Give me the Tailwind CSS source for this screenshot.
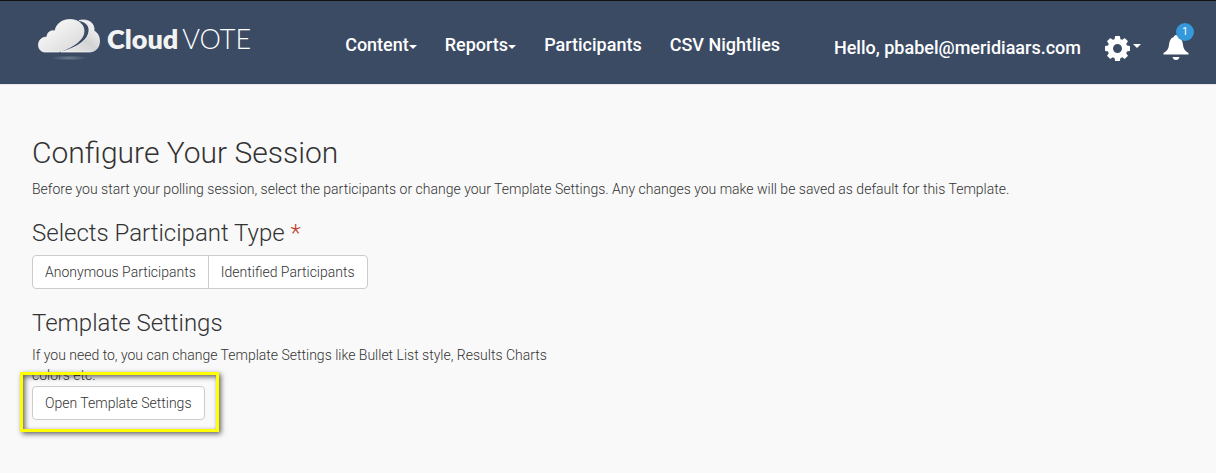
<!DOCTYPE html>
<html lang="en">
<head>
  <meta charset="UTF-8" />
  <meta name="viewport" content="width=device-width, initial-scale=1.0" />
  <title>CloudVOTE - Configure Your Session</title>
  <script src="https://cdn.jsdelivr.net/npm/@tailwindcss/browser@4"></script>
</head>

<body class="min-h-screen bg-[#f9f9f9] font-['Roboto',sans-serif] text-sm leading-5 font-light text-[#333]">

  <header class="flex min-h-[85px] items-start border-t border-b border-t-[#111] border-b-[#e7e7e7] bg-[#3b4b64] pl-[38px] pr-[27px] text-lg leading-6 font-medium text-white">
    <a href="#" class="flex items-start pt-4 font-['Lato',sans-serif] text-[27px] leading-11" aria-label="CloudVOTE home">
      <svg class="mr-[7px] h-[44px] w-[62px]" viewBox="0 0 62 44" aria-hidden="true">
        <defs>
          <linearGradient id="front" x1="0" y1="0" x2="1" y2="1">
            <stop offset="0" stop-color="#fff" />
            <stop offset="1" stop-color="#d6d6d6" />
          </linearGradient>
          <linearGradient id="back" x1="1" y1="0" x2="0" y2="1">
            <stop offset="0" stop-color="#fff" />
            <stop offset="0.5" stop-color="#d3d3d3" />
            <stop offset="1" stop-color="#eee" />
          </linearGradient>
          <radialGradient id="shade">
            <stop offset="0" stop-color="#6f7c90" />
            <stop offset="1" stop-color="#3b4b64" />
          </radialGradient>
        </defs>
        <ellipse cx="31" cy="41" rx="18" ry="2.5" fill="url(#shade)" />
        <path d="M6 35C2 34 0.500 31 0.500 28C0.500 23 4 20 9 20C9 15 13 13 17 14C18 7 24 2.500 32 2.500C40 2.500 46 7 46 14C46 22 38 29 21 35Z" fill="url(#front)" stroke="#fff" stroke-width="0.7" />
        <path d="M41 3.500C49 1.500 57 5 56 14C60 16 61.500 20 61.500 24C61.500 31 57 35 51 35H23C41 30 51 22 51 13C51 8 47 4.500 41 3.500Z" fill="url(#back)" stroke="#fff" stroke-width="0.7" />
      </svg>
      <span class="font-extrabold text-[#f3f3f3]">Cloud</span><span class="ml-1 font-light">VOTE</span>
    </a>

    <nav class="ml-[94px] flex gap-7 pt-8">
      <a href="#" class="flex items-center">Content<span class="mt-1 border-x-4 border-t-4 border-x-transparent border-t-white"></span></a>
      <a href="#" class="flex items-center">Reports<span class="mt-1 border-x-4 border-t-4 border-x-transparent border-t-white"></span></a>
      <a href="#">Participants</a>
      <a href="#">CSV Nightlies</a>
    </nav>

    <div class="ml-auto flex items-center pt-[34px]">
      <span>Hello, pbabel@meridiaars.com</span>
      <button type="button" class="ml-6 flex items-center gap-[3px]" aria-label="Settings">
        <svg class="size-[25px]" viewBox="0 0 1200 1200" fill="currentColor" aria-hidden="true">
          <path fill-rule="evenodd" d="M500 0H700Q712 0 716 14L742 150Q780 160 822 182L936 105Q947 98 956 107L1094 245Q1102 254 1095 264L1018 378Q1038 412 1050 458L1186 484Q1200 487 1200 500V700Q1200 713 1186 716L1050 742Q1038 788 1018 822L1095 936Q1102 946 1094 955L956 1093Q947 1102 936 1095L822 1018Q780 1040 742 1050L716 1186Q712 1200 700 1200H500Q488 1200 484 1186L458 1050Q420 1040 378 1018L264 1095Q253 1102 244 1093L106 955Q98 946 105 936L182 822Q162 788 150 742L14 716Q0 713 0 700V500Q0 487 14 484L150 458Q162 412 182 378L105 264Q98 254 106 245L244 107Q253 98 264 105L378 182Q420 160 458 150L484 14Q488 0 500 0ZM600 385A215 215 0 1 0 600 815A215 215 0 1 0 600 385Z" />
        </svg>
        <span class="mb-1 border-x-4 border-t-4 border-x-transparent border-t-white"></span>
      </button>
      <button type="button" class="relative ml-[22px]" aria-label="Notifications">
        <svg class="h-[26px] w-[26px]" viewBox="0 0 26 26" fill="currentColor" aria-hidden="true">
          <path d="M13 0C14.300 0 15 1 15.200 2C18.500 3 19.500 6 20 10C20.500 14 22 16 25.500 18V19.500H0.500V18C4 16 5.500 14 6 10C6.500 6 7.500 3 10.800 2C11 1 11.700 0 13 0Z" />
          <path d="M9.500 22H16.500C16 24 14.800 25 13 25C11.200 25 10 24 9.500 22Z" />
        </svg>
        <span class="absolute -top-3 left-[13px] flex size-[18px] items-center justify-center rounded-full bg-[#3498db] text-[10px] leading-none font-normal">1</span>
      </button>
    </div>
  </header>

  <main class="px-8 pt-[51px] pb-10">
    <h1 class="mb-[10px] text-[30px] leading-[33px]">Configure Your Session</h1>
    <p>Before you start your polling session, select the participants or change your Template Settings. Any changes you make will be saved as default for this Template.</p>

    <section class="mt-5" aria-labelledby="participantType">
      <h2 id="participantType" class="mb-2 text-2xl leading-7">Selects Participant Type <span class="text-[#c0392b]">*</span></h2>
      <div class="flex">
        <button type="button" class="rounded-l border border-[#ccc] bg-white px-3 py-1.5">Anonymous Participants</button>
        <button type="button" class="-ml-px rounded-r border border-[#ccc] bg-white px-3 py-1.5">Identified Participants</button>
      </div>
    </section>

    <section class="mt-5 max-w-[546px]" aria-labelledby="templateSettings">
      <h2 id="templateSettings" class="mb-2 text-2xl leading-7">Template Settings</h2>
      <p>If you need to, you can change Template Settings like Bullet List style, Results Charts colors etc.</p>
      <div class="relative mt-px inline-block">
        <button type="button" class="block rounded border border-[#ccc] bg-white px-3 py-1.5">Open Template Settings</button>
        <!-- highlight frame around the button -->
        <div class="pointer-events-none absolute -top-[14px] -right-[14px] -bottom-3 -left-3 border-3 border-[#ff0] shadow-[2px_2px_5px_rgba(0,0,0,0.6),inset_2px_2px_5px_rgba(0,0,0,0.6)]"></div>
      </div>
    </section>
  </main>

</body>
</html>
